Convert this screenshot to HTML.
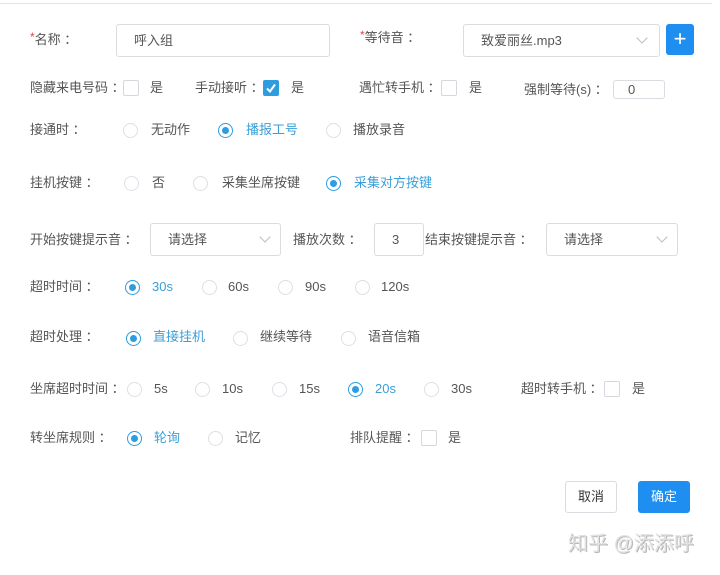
<!DOCTYPE html>
<html><head><meta charset="utf-8"><style>
*{margin:0;padding:0;box-sizing:border-box}
body{width:720px;height:575px;background:#fff;position:relative;overflow:hidden;font-family:"Liberation Sans","Noto Sans CJK SC",sans-serif;font-size:13px;color:#555}
.t{position:absolute;height:20px;line-height:20px;white-space:nowrap}
.a{color:#3a9fd9}
.r{position:absolute;width:15px;height:15px;border:1px solid #dcdfe4;border-radius:50%;background:#fff}
.r.on{border-color:#2d9de0}
.r.on::after{content:"";position:absolute;left:3px;top:3px;width:7px;height:7px;border-radius:50%;background:#2d9de0}
.c{position:absolute;width:16px;height:16px;border:1px solid #d5d8de;border-radius:2px;background:#fff}
.c.on{background:#2d9de0;border-color:#2d9de0}
.box{position:absolute;border:1px solid #d9dce1;border-radius:3px;background:#fff}
.arrow{position:absolute;width:8px;height:8px;border-right:1px solid #bbb;border-bottom:1px solid #bbb;transform:rotate(45deg)}
.req{color:#e54545;font-size:12px;vertical-align:top;position:relative;top:-3px}
</style></head><body>
<div style="position:absolute;left:0;top:3px;width:712px;height:1px;background:#e4e4e4"></div>

<div class="t" style="left:30px;top:30px"><span class="req">*</span>名称 ：</div>
<div class="box" style="left:116px;top:24px;width:214px;height:33px"></div>
<div class="t" style="left:134px;top:31px">呼入组</div>
<div class="t" style="left:360px;top:28px"><span class="req">*</span>等待音 ：</div>
<div class="box" style="left:463px;top:24px;width:197px;height:33px"></div>
<div class="t" style="left:481px;top:31px">致爱丽丝.mp3</div>
<div class="arrow" style="left:638px;top:34px"></div>
<div style="position:absolute;left:666px;top:24px;width:28px;height:31px;background:#1e8ff0;border-radius:3px;color:#fff;font-size:22px;line-height:29px;text-align:center">+</div>

<div class="t" style="left:30px;top:78px">隐藏来电号码 ：</div>
<div class="c" style="left:123px;top:80px"></div>
<div class="t" style="left:150px;top:78px">是</div>
<div class="t" style="left:195px;top:78px">手动接听 ：</div>
<div class="c on" style="left:263px;top:80px"><svg width="14" height="14" viewBox="0 0 14 14" style="position:absolute;left:0;top:0"><path d="M3 7.5 L6 10.5 L11 3.5" stroke="#fff" stroke-width="2" fill="none"/></svg></div>
<div class="t" style="left:291px;top:78px">是</div>
<div class="t" style="left:359px;top:78px">遇忙转手机 ：</div>
<div class="c" style="left:441px;top:80px"></div>
<div class="t" style="left:469px;top:78px">是</div>
<div class="t" style="left:524px;top:80px">强制等待(s) ：</div>
<div class="box" style="left:613px;top:80px;width:52px;height:19px"></div>
<div class="t" style="left:628px;top:80px">0</div>

<div class="t" style="left:30px;top:120px">接通时 ：</div>
<div class="r" style="left:123px;top:123px"></div><div class="t" style="left:151px;top:120px">无动作</div>
<div class="r on" style="left:218px;top:123px"></div><div class="t a" style="left:246px;top:120px">播报工号</div>
<div class="r" style="left:326px;top:123px"></div><div class="t" style="left:353px;top:120px">播放录音</div>

<div class="t" style="left:30px;top:173px">挂机按键 ：</div>
<div class="r" style="left:124px;top:176px"></div><div class="t" style="left:152px;top:173px">否</div>
<div class="r" style="left:193px;top:176px"></div><div class="t" style="left:222px;top:173px">采集坐席按键</div>
<div class="r on" style="left:326px;top:176px"></div><div class="t a" style="left:354px;top:173px">采集对方按键</div>

<div class="t" style="left:30px;top:230px">开始按键提示音 ：</div>
<div class="box" style="left:150px;top:223px;width:131px;height:33px"></div>
<div class="t" style="left:168px;top:230px">请选择</div>
<div class="arrow" style="left:261px;top:233px"></div>
<div class="t" style="left:293px;top:230px">播放次数 ：</div>
<div class="box" style="left:374px;top:223px;width:50px;height:33px"></div>
<div class="t" style="left:392px;top:230px">3</div>
<div class="t" style="left:425px;top:230px">结束按键提示音 ：</div>
<div class="box" style="left:546px;top:223px;width:132px;height:33px"></div>
<div class="t" style="left:564px;top:230px">请选择</div>
<div class="arrow" style="left:658px;top:233px"></div>

<div class="t" style="left:30px;top:277px">超时时间 ：</div>
<div class="r on" style="left:125px;top:280px"></div><div class="t a" style="left:152px;top:277px">30s</div>
<div class="r" style="left:202px;top:280px"></div><div class="t" style="left:228px;top:277px">60s</div>
<div class="r" style="left:278px;top:280px"></div><div class="t" style="left:305px;top:277px">90s</div>
<div class="r" style="left:355px;top:280px"></div><div class="t" style="left:381px;top:277px">120s</div>

<div class="t" style="left:30px;top:327px">超时处理 ：</div>
<div class="r on" style="left:126px;top:331px"></div><div class="t a" style="left:153px;top:327px">直接挂机</div>
<div class="r" style="left:233px;top:331px"></div><div class="t" style="left:260px;top:327px">继续等待</div>
<div class="r" style="left:341px;top:331px"></div><div class="t" style="left:368px;top:327px">语音信箱</div>

<div class="t" style="left:30px;top:379px">坐席超时时间 ：</div>
<div class="r" style="left:127px;top:382px"></div><div class="t" style="left:154px;top:379px">5s</div>
<div class="r" style="left:195px;top:382px"></div><div class="t" style="left:222px;top:379px">10s</div>
<div class="r" style="left:272px;top:382px"></div><div class="t" style="left:299px;top:379px">15s</div>
<div class="r on" style="left:348px;top:382px"></div><div class="t a" style="left:375px;top:379px">20s</div>
<div class="r" style="left:424px;top:382px"></div><div class="t" style="left:451px;top:379px">30s</div>
<div class="t" style="left:521px;top:379px">超时转手机 ：</div>
<div class="c" style="left:604px;top:381px"></div>
<div class="t" style="left:632px;top:379px">是</div>

<div class="t" style="left:30px;top:428px">转坐席规则 ：</div>
<div class="r on" style="left:127px;top:431px"></div><div class="t a" style="left:154px;top:428px">轮询</div>
<div class="r" style="left:208px;top:431px"></div><div class="t" style="left:235px;top:428px">记忆</div>
<div class="t" style="left:350px;top:428px">排队提醒 ：</div>
<div class="c" style="left:421px;top:430px"></div>
<div class="t" style="left:448px;top:428px">是</div>

<div style="position:absolute;left:565px;top:481px;width:52px;height:32px;border:1px solid #d9dce1;border-radius:3px;text-align:center;line-height:30px;color:#333">取消</div>
<div style="position:absolute;left:638px;top:481px;width:52px;height:32px;background:#1e8ff0;border-radius:3px;text-align:center;line-height:32px;color:#fff">确定</div>

<div class="t" style="left:568px;top:532px;font-size:20px;line-height:24px;height:24px;color:#e2e2e2;font-weight:normal;text-shadow:1px 1px 0 #b8b8b8">知乎 @添添呼</div>
</body></html>
